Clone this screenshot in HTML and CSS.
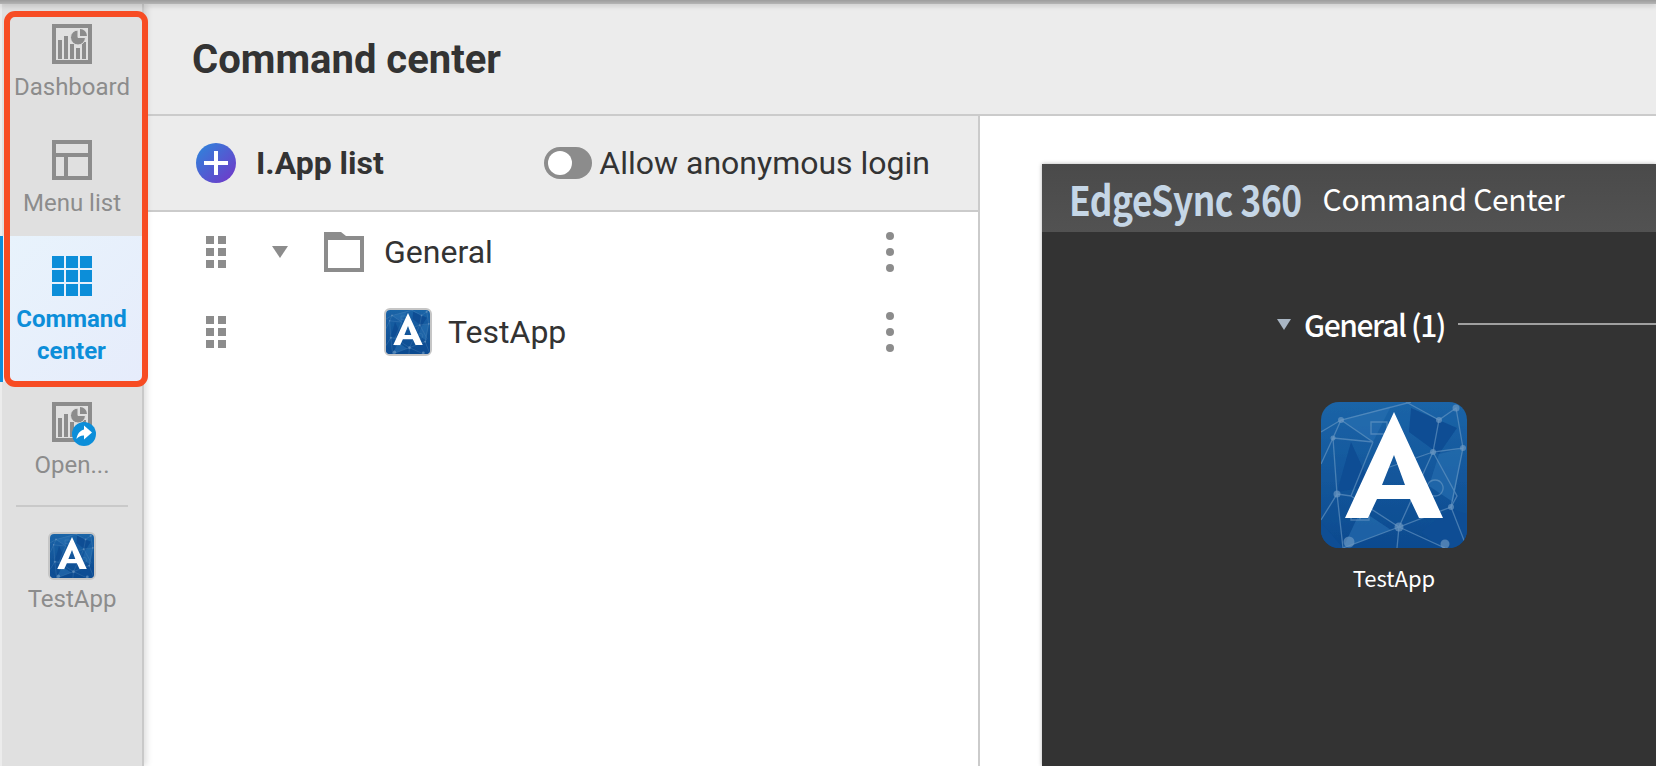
FILE: index.html
```html
<!DOCTYPE html>
<html lang="en">
<head>
    <meta charset="UTF-8">
    <title>Command center</title>
    <link rel="stylesheet" href="styles.css">
</head>
<body>
    <svg class="defs" width="0" height="0">
        <defs>
            <linearGradient id="tileBlue" x1="0" y1="0" x2="0" y2="1">
                <stop offset="0" stop-color="#1c65a8"/>
                <stop offset="1" stop-color="#0d4b90"/>
            </linearGradient>
            <linearGradient id="plusBlue" x1="0" y1="0" x2="1" y2="1">
                <stop offset="0" stop-color="#2b88dc"/>
                <stop offset="1" stop-color="#7434c8"/>
            </linearGradient>
            <symbol id="appTile" viewBox="0 0 146 146">
                <rect width="146" height="146" fill="url(#tileBlue)"/>
                <path fill="#0f4f95" d="M30 40 L50 84 L16 90 Z M90 6 L136 26 L118 52 L88 30 Z M100 130 L130 106 L146 112 V146 H120 Z M0 120 L22 146 H0 Z"/>
                <path fill="#2a72b3" opacity=".6" d="M20 18 L70 4 L52 40 Z M118 52 L142 46 L132 100 L108 84 Z M22 146 L70 128 L40 108 Z"/>
                <g fill="none" stroke="#6d9bc6" stroke-width="1.300" opacity=".6">
                    <path d="M0 30 L20 18 L90 0 M20 18 L12 36 L0 62 M20 18 L52 40 L12 36 M12 36 L16 92 L0 118 M16 92 L30 94 L52 40 M16 92 L22 146 M30 94 L78 125 L130 105 L142 46 L112 50 L78 125"/>
                    <path d="M112 50 L118 18 L135 6 L142 46 M118 18 L85 0 M112 50 L60 68 M78 125 L76 146 M78 125 L124 146 M130 105 L146 146 M22 146 L78 125 M130 105 L136 94 L112 50"/>
                    <path d="M30 108 h18 v10 h-18 Z M30 113 h18 M39 108 v10 M50 20 h16 v12 h-16 Z M114 78 a8 8 0 1 0 .1 0 Z"/>
                </g>
                <g fill="#6f9ac4" opacity=".65">
                    <circle cx="20" cy="18" r="3"/><circle cx="12" cy="36" r="2.500"/><circle cx="16" cy="92" r="3.500"/>
                    <circle cx="78" cy="125" r="4.500"/><circle cx="112" cy="50" r="3"/><circle cx="118" cy="18" r="3"/>
                    <circle cx="135" cy="6" r="3.500"/><circle cx="142" cy="46" r="3"/><circle cx="130" cy="105" r="3"/>
                    <circle cx="28" cy="140" r="5.500"/><circle cx="124" cy="142" r="4.500"/>
                </g>
                <path fill="#fff" fill-rule="evenodd" d="M73 10 L122 116 H98 L89 97 H56 L47 116 H24 Z M73 53 L61 83 H84 Z"/>
            </symbol>
            <symbol id="chartIcon" viewBox="0 0 40 40">
                <path fill="none" stroke="#8c8c8c" stroke-width="4" d="M2 2 H38 V38 H2 Z"/>
                <path fill="#8c8c8c" d="M6 16 H10 V35 H6 Z M12 12 H16 V35 H12 Z M18 20 H22 V35 H18 Z M24 24 H28 V35 H24 Z M30 18 H34 V35 H30 Z"/>
                <path fill="#8c8c8c" stroke="#e0e0e0" stroke-width="1" d="M26 6 A7.500 7.500 0 1 0 33.500 13.500 L26 13.500 Z"/>
                <path fill="#8c8c8c" d="M28 5 A7 7 0 0 1 35 12 L28 12 Z"/>
            </symbol>
        </defs>
    </svg>

    <div class="topline"></div>
    <div class="app">
        <nav class="sidebar">
            <a class="nav-item">
                <svg class="nav-icon"><use href="#chartIcon"/></svg>
                <span>Dashboard</span>
            </a>
            <a class="nav-item">
                <svg class="nav-icon" viewBox="0 0 40 40">
                    <path fill="none" stroke="#8c8c8c" stroke-width="4" d="M2 2 H38 V38 H2 Z M2 15 H38 M14 15 V38"/>
                </svg>
                <span>Menu list</span>
            </a>
            <a class="nav-item nav-item-active">
                <svg class="nav-icon" viewBox="0 0 40 40">
                    <path fill="#0c8ed9" d="M0 0 H12 V12 H0 Z M14 0 H26 V12 H14 Z M28 0 H40 V12 H28 Z M0 14 H12 V26 H0 Z M14 14 H26 V26 H14 Z M28 14 H40 V26 H28 Z M0 28 H12 V40 H0 Z M14 28 H26 V40 H14 Z M28 28 H40 V40 H28 Z"/>
                </svg>
                <span>Command center</span>
            </a>
            <a class="nav-item">
                <span class="nav-icon-wrap">
                    <svg class="nav-icon"><use href="#chartIcon"/></svg>
                    <svg class="share-badge" viewBox="0 0 24 24">
                        <circle cx="12" cy="12" r="12" fill="#0c8ed9"/>
                        <path fill="#fff" d="M12 3.500 L20 10.500 L12 17.500 V13.500 C9 13.300 6.500 14.500 4.500 17 C5 12.500 8 8.300 12 7.500 Z"/>
                    </svg>
                </span>
                <span>Open...</span>
            </a>
            <div class="nav-divider"></div>
            <a class="nav-item nav-item-app">
                <svg class="app-thumb"><use href="#appTile"/></svg>
                <span>TestApp</span>
            </a>
            <div class="highlight-box"></div>
        </nav>

        <main class="main">
            <header class="page-header">
                <h1>Command center</h1>
            </header>
            <div class="columns">
                <section class="list-panel">
                    <div class="toolbar">
                        <svg class="add-btn" viewBox="0 0 40 40">
                            <circle cx="20" cy="20" r="20" fill="url(#plusBlue)"/>
                            <path fill="#fff" d="M18 8 H22 V18 H32 V22 H22 V32 H18 V22 H8 V18 H18 Z"/>
                        </svg>
                        <h2>I.App list</h2>
                        <span class="switch"><span class="switch-knob"></span></span>
                        <span class="switch-label">Allow anonymous login</span>
                    </div>
                    <ul class="tree">
                        <li class="tree-row">
                            <span class="grip"><i></i><i></i><i></i><i></i><i></i><i></i></span>
                            <span class="caret"></span>
                            <svg class="folder" viewBox="0 0 40 40">
                                <path fill="#8c8c8c" fill-rule="evenodd" d="M0 0 H17 L22 4 H40 V40 H0 Z M4 8 V36 H36 V8 Z"/>
                            </svg>
                            <span class="tree-name">General</span>
                            <span class="dots"><i></i><i></i><i></i></span>
                        </li>
                        <li class="tree-row tree-row-child">
                            <span class="grip"><i></i><i></i><i></i><i></i><i></i><i></i></span>
                            <svg class="app-thumb"><use href="#appTile"/></svg>
                            <span class="tree-name">TestApp</span>
                            <span class="dots"><i></i><i></i><i></i></span>
                        </li>
                    </ul>
                </section>

                <section class="preview-panel">
                    <div class="preview">
                        <div class="preview-head">
                            <span class="brand">EdgeSync 360</span>
                            <span class="brand-sub">Command Center</span>
                        </div>
                        <div class="preview-body">
                            <div class="group-head">
                                <span class="group-caret"></span>
                                <span class="group-name">General (1)</span>
                                <span class="group-line"></span>
                            </div>
                            <div class="app-card">
                                <svg class="app-tile"><use href="#appTile"/></svg>
                                <span>TestApp</span>
                            </div>
                        </div>
                    </div>
                </section>
            </div>
        </main>
    </div>
</body>
</html>
```

FILE: styles.css
```css
* {
    box-sizing: border-box;
}

html, body {
    height: 100%;
}

body {
    margin: 0;
    overflow: hidden;
    display: flex;
    flex-direction: column;
    font-family: 'Roboto', sans-serif;
    color: #333;
    background: #fff;
}

.defs {
    position: absolute;
}

.topline {
    position: relative;
    z-index: 3;
    height: 4px;
    flex: none;
    background: linear-gradient(#9c9c9c, #b4b4b4);
    box-shadow: 0 2px 5px rgba(0, 0, 0, 0.16);
}

.app {
    flex: 1;
    display: flex;
    min-height: 0;
}

/* Left navigation */
.sidebar {
    position: relative;
    z-index: 2;
    width: 144px;
    flex: none;
    display: flex;
    flex-direction: column;
    background: #e0e0e0;
    border-left: 2px solid #ececec;
    border-right: 2px solid #c9c9c9;
    box-shadow: 3px 0 6px rgba(0, 0, 0, 0.12);
}

.nav-item {
    display: flex;
    flex-direction: column;
    align-items: center;
    height: 116px;
    padding-top: 20px;
    color: #8c8c8c;
    font-size: 24px;
    line-height: 32px;
    text-align: center;
}

.nav-item span {
    display: block;
}

.nav-item > span:last-child {
    margin-top: 7px;
}

.nav-icon {
    display: block;
    width: 40px;
    height: 40px;
}

.nav-item-active {
    height: 146px;
    margin-left: -2px;
    padding: 20px 2px 0 0;
    border-left: 3px solid #0c8ed9;
    background: linear-gradient(135deg, #e8f3fc, #e6ecfb);
    color: #0c8ed9;
    font-weight: 700;
}

.nav-item-active > span:last-child {
    margin-top: 7px;
    width: 120px;
}

.nav-icon-wrap {
    position: relative;
    width: 40px;
    height: 40px;
}

.share-badge {
    position: absolute;
    left: 20px;
    top: 20px;
    width: 24px;
    height: 24px;
}

.nav-divider {
    height: 2px;
    margin: 7px 14px 0;
    background: #c9c9c9;
}

.nav-item-app {
    padding-top: 25px;
}

.nav-item-app > span:last-child {
    margin-top: 3px;
}

.app-thumb {
    display: block;
    width: 48px;
    height: 48px;
    border: 2px solid #c6c6c6;
    border-radius: 6px;
}

.highlight-box {
    position: absolute;
    left: 2px;
    top: 7px;
    width: 144px;
    height: 376px;
    border: 6px solid #f74c23;
    border-radius: 11px;
}

/* Main area */
.main {
    flex: 1;
    min-width: 0;
    display: flex;
    flex-direction: column;
}

.page-header {
    height: 112px;
    flex: none;
    display: flex;
    align-items: center;
    padding-left: 48px;
    background: #ececec;
    border-bottom: 2px solid #cbcbcb;
}

h1 {
    margin: 0;
    font-size: 40px;
    font-weight: 700;
}

.columns {
    flex: 1;
    min-height: 0;
    display: flex;
}

.list-panel {
    width: 836px;
    flex: none;
    border-right: 2px solid #cbcbcb;
}

.toolbar {
    height: 96px;
    display: flex;
    align-items: center;
    padding-left: 52px;
    background: #ececec;
    border-bottom: 2px solid #cbcbcb;
}

.add-btn {
    width: 40px;
    height: 40px;
}

h2 {
    margin: 0 0 0 20px;
    font-size: 32px;
    font-weight: 700;
}

.switch {
    position: relative;
    width: 48px;
    height: 32px;
    margin-left: auto;
    border-radius: 16px;
    background: #8c8c8c;
}

.switch-knob {
    position: absolute;
    left: 4px;
    top: 4px;
    width: 24px;
    height: 24px;
    border-radius: 50%;
    background: #fff;
}

.switch-label {
    margin: 0 48px 0 7px;
    font-size: 32px;
}

.tree {
    margin: 0;
    padding: 0;
    list-style: none;
}

.tree-row {
    height: 80px;
    display: flex;
    align-items: center;
    padding-left: 62px;
    font-size: 32px;
}

.grip {
    display: grid;
    grid-template-columns: 8px 8px;
    grid-auto-rows: 8px;
    gap: 4px;
}

.grip i {
    background: #8c8c8c;
}

.caret {
    width: 0;
    height: 0;
    margin-left: 46px;
    border-left: 8px solid transparent;
    border-right: 8px solid transparent;
    border-top: 12px solid #8c8c8c;
}

.folder {
    width: 40px;
    height: 40px;
    margin-left: 36px;
}

.tree-name {
    margin-left: 20px;
}

.tree-row-child .app-thumb {
    margin-left: 158px;
}

.tree-row-child .tree-name {
    margin-left: 16px;
}

.dots {
    display: flex;
    flex-direction: column;
    gap: 8px;
    margin-left: auto;
    margin-right: 84px;
}

.dots i {
    width: 8px;
    height: 8px;
    border-radius: 50%;
    background: #8c8c8c;
}

/* Preview of the command center */
.preview-panel {
    flex: 1;
    min-width: 0;
    padding: 48px 0 0 62px;
    background: #fff;
    overflow: hidden;
}

.preview {
    height: 100%;
    display: flex;
    flex-direction: column;
    background: #333;
    color: #fff;
    font-family: 'Noto Sans CJK JP', 'Noto Sans', sans-serif;
    box-shadow: 0 0 4px rgba(0, 0, 0, 0.3);
}

.preview-head {
    height: 68px;
    flex: none;
    display: flex;
    align-items: center;
    padding-left: 27px;
    background: linear-gradient(#4a4a4a, #525252);
}

/* the real one is a condensed face, so squeeze it a bit */
.brand {
    font-size: 41px;
    font-weight: 700;
    letter-spacing: -0.500px;
    color: #c5d6e6;
    transform: scaleX(0.86);
    transform-origin: left center;
}

.brand-sub {
    margin-left: -17px;
    font-size: 30px;
    letter-spacing: -0.350px;
}

.preview-body {
    flex: 1;
    padding-top: 92px;
}

.group-head {
    display: flex;
    align-items: center;
    height: 48px;
    margin-top: -24px;
    padding-left: 235px;
}

.group-caret {
    width: 0;
    height: 0;
    border-left: 7px solid transparent;
    border-right: 7px solid transparent;
    border-top: 11px solid #a9b6c4;
}

.group-name {
    margin-left: 13px;
    font-size: 30px;
    font-weight: 500;
    letter-spacing: -1.400px;
}

.group-line {
    flex: 1;
    height: 2px;
    margin-left: 13px;
    background: #a0a0a0;
}

.app-card {
    display: flex;
    flex-direction: column;
    align-items: center;
    width: 146px;
    margin: 54px 0 0 279px;
    font-size: 22px;
}

.app-tile {
    display: block;
    width: 146px;
    height: 146px;
    border-radius: 18px;
    margin-bottom: 13px;
}
```
